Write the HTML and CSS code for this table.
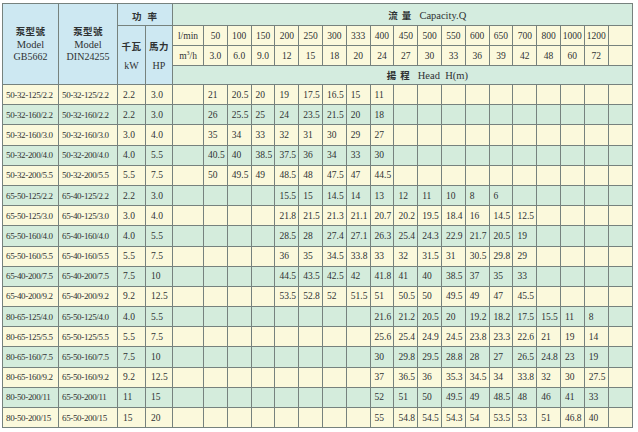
FILE: index.html
```html
<!DOCTYPE html>
<html>
<head>
<meta charset="utf-8">
<link rel="stylesheet" href="styles.css">
</head>
<body>
<div class="page">
<table class="pump">
<colgroup>
<col class="c-model1"><col class="c-model2"><col class="c-kw"><col class="c-hp"><col class="c-unit">
<col class="c-v"><col class="c-v"><col class="c-v"><col class="c-v"><col class="c-v"><col class="c-v"><col class="c-v"><col class="c-v"><col class="c-v"><col class="c-v"><col class="c-v"><col class="c-v"><col class="c-v"><col class="c-v"><col class="c-v"><col class="c-v"><col class="c-v">
<col class="c-end">
</colgroup>
<thead>
<tr class="h1">
<th rowspan="4" class="blue model"><span class="cjk">泵型號</span><br>Model<br><span class="sm">GB5662</span></th>
<th rowspan="4" class="blue model"><span class="cjk">泵型號</span><br>Model<br><span class="sm">DIN24255</span></th>
<th colspan="2" class="blue power"><span class="cjk">功率</span></th>
<th colspan="19" class="green title"><span class="cjk">流量</span>Capacity.Q</th>
</tr>
<tr class="h2">
<th rowspan="3" class="blue pw"><span class="cjk">千瓦</span><br>kW</th>
<th rowspan="3" class="blue pw"><span class="cjk">馬力</span><br>HP</th>
<th class="yel unit">l/min</th>
<th class="yel num">50</th><th class="yel num">100</th><th class="yel num">150</th><th class="yel num">200</th><th class="yel num">250</th><th class="yel num">300</th><th class="yel num">333</th><th class="yel num">400</th><th class="yel num">450</th><th class="yel num">500</th><th class="yel num">550</th><th class="yel num">600</th><th class="yel num">650</th><th class="yel num">700</th><th class="yel num">800</th><th class="yel num">1000</th><th class="yel num">1200</th><th class="yel"></th>
</tr>
<tr class="h3">
<th class="yel unit">m<sup>3</sup>/h</th>
<th class="yel num">3.0</th><th class="yel num">6.0</th><th class="yel num">9.0</th><th class="yel num">12</th><th class="yel num">15</th><th class="yel num">18</th><th class="yel num">20</th><th class="yel num">24</th><th class="yel num">27</th><th class="yel num">30</th><th class="yel num">33</th><th class="yel num">36</th><th class="yel num">39</th><th class="yel num">42</th><th class="yel num">48</th><th class="yel num">60</th><th class="yel num">72</th><th class="yel"></th>
</tr>
<tr class="h4">
<th colspan="19" class="green title head"><span class="cjk">揚程</span>Head&nbsp;&nbsp;H(m)</th>
</tr>
</thead>
<tbody id="body"></tbody>
</table>
</div>
<script src="app.js"></script>
</body>
</html>
```

FILE: app.js
```js
var rows = [
 ["50-32-125/2.2","50-32-125/2.2","2.2","3.0",0,["21","20.5","20","19","17.5","16.5","15","11"]],
 ["50-32-160/2.2","50-32-160/2.2","2.2","3.0",0,["26","25.5","25","24","23.5","21.5","20","18"]],
 ["50-32-160/3.0","50-32-160/3.0","3.0","4.0",0,["35","34","33","32","31","30","29","27"]],
 ["50-32-200/4.0","50-32-200/4.0","4.0","5.5",0,["40.5","40","38.5","37.5","36","34","33","30"]],
 ["50-32-200/5.5","50-32-200/5.5","5.5","7.5",0,["50","49.5","49","48.5","48","47.5","47","44.5"]],
 ["65-50-125/2.2","65-40-125/2.2","2.2","3.0",3,["15.5","15","14.5","14","13","12","11","10","8","6"]],
 ["65-50-125/3.0","65-40-125/3.0","3.0","4.0",3,["21.8","21.5","21.3","21.1","20.7","20.2","19.5","18.4","16","14.5","12.5"]],
 ["65-50-160/4.0","65-40-160/4.0","4.0","5.5",3,["28.5","28","27.4","27.1","26.3","25.4","24.3","22.9","21.7","20.5","19"]],
 ["65-50-160/5.5","65-40-160/5.5","5.5","7.5",3,["36","35","34.5","33.8","33","32","31.5","31","30.5","29.8","29"]],
 ["65-40-200/7.5","65-40-200/7.5","7.5","10",3,["44.5","43.5","42.5","42","41.8","41","40","38.5","37","35","33"]],
 ["65-40-200/9.2","65-40-200/9.2","9.2","12.5",3,["53.5","52.8","52","51.5","51","50.5","50","49.5","49","47","45.5"]],
 ["80-65-125/4.0","65-50-125/4.0","4.0","5.5",7,["21.6","21.2","20.5","20","19.2","18.2","17.5","15.5","11","8"]],
 ["80-65-125/5.5","65-50-125/5.5","5.5","7.5",7,["25.6","25.4","24.9","24.5","23.8","23.3","22.6","21","19","14"]],
 ["80-65-160/7.5","65-50-160/7.5","7.5","10",7,["30","29.8","29.5","28.8","28","27","26.5","24.8","23","19"]],
 ["80-65-160/9.2","65-50-160/9.2","9.2","12.5",7,["37","36.5","36","35.3","34.5","34","33.8","32","30","27.5"]],
 ["80-50-200/11","65-50-200/11","11","15",7,["52","51","50","49.5","49","48.5","48","46","41","33"]],
 ["80-50-200/15","65-50-200/15","15","20",7,["55","54.8","54.5","54.3","54","53.5","53","51","46.8","40"]]
];
var tb = document.getElementById("body");
rows.forEach(function (r, i) {
  var tr = document.createElement("tr");
  tr.className = i % 2 ? "alt" : "base";
  var html = '<td class="mdl">' + r[0] + '</td><td class="mdl">' + r[1] + '</td><td class="pv">' + r[2] + '</td><td class="pv">' + r[3] + '</td><td></td>';
  for (var c = 0; c < 18; c++) {
    var k = c - r[4];
    var v = (k >= 0 && k < r[5].length) ? r[5][k] : "";
    html += '<td class="dv">' + v + '</td>';
  }
  tr.innerHTML = html;
  tb.appendChild(tr);
});
```

FILE: styles.css
```css
html, body {
  margin: 0;
  padding: 0;
  background: #ffffff;
}
.page {
  padding: 3px 0 0 2px;
}
.pump {
  border-collapse: collapse;
  table-layout: fixed;
  width: 630px;
  font-family: "Liberation Serif", "Noto Sans CJK TC", serif;
  color: #2f3233;
  border: 1px solid #a4adab;
}
.c-model1 { width: 56px; }
.c-model2 { width: 59px; }
.c-kw { width: 28px; }
.c-hp { width: 27px; }
.c-unit { width: 31px; }
.c-v { width: 23.8px; }
.c-end { width: 24px; }
.pump th, .pump td {
  border: 1px solid #76827e;
  padding: 0;
  overflow: hidden;
  white-space: nowrap;
  font-weight: normal;
}
.pump .blue { background: #cde8f2; }
.pump .green { background: #d4ecdf; }
.pump .yel { background: #fbf9dc; }
.cjk {
  font-family: "Noto Sans CJK TC", sans-serif;
  font-weight: 700;
}
.pump .model {
  font-size: 10.5px;
  line-height: 12.5px;
  text-align: center;
  vertical-align: middle;
  padding-top: 1px;
}
.model .cjk { font-size: 9.5px; letter-spacing: 0.3px; }
.model .sm { font-size: 10px; }
.pump .power {
  text-align: center;
  padding-left: 5px;
}
.power .cjk {
  font-size: 9.5px;
  letter-spacing: 6px;
}
.pump .pw {
  font-size: 10px;
  line-height: 19px;
  text-align: center;
  vertical-align: top;
  padding-top: 11px;
}
.pw .cjk { font-size: 9.5px; letter-spacing: 0.5px; }
.pump .title {
  font-size: 10.5px;
  text-align: center;
  padding-left: 50px;
}
.title .cjk {
  font-size: 9.5px;
  letter-spacing: 4px;
  margin-right: 4px;
}
.pump .unit {
  font-size: 9.5px;
  text-align: center;
}
.unit sup { font-size: 6px; vertical-align: 4px; line-height: 0; }
.pump .num {
  font-size: 9.5px;
  text-align: center;
}
.h1 { height: 22px; }
.h2 { height: 20px; }
.h3 { height: 20px; }
.h4 { height: 19px; }
.pump tbody tr { height: 20.2px; }
.base td { background: #fbf9dc; }
.alt td { background: #d4ecdc; }
.pump .mdl {
  font-size: 9px;
  letter-spacing: -0.35px;
  padding-left: 3px;
}
.pump .pv {
  font-size: 9.5px;
  padding-left: 5px;
}
.pump .dv {
  font-size: 9.5px;
  padding-left: 4px;
}
```
